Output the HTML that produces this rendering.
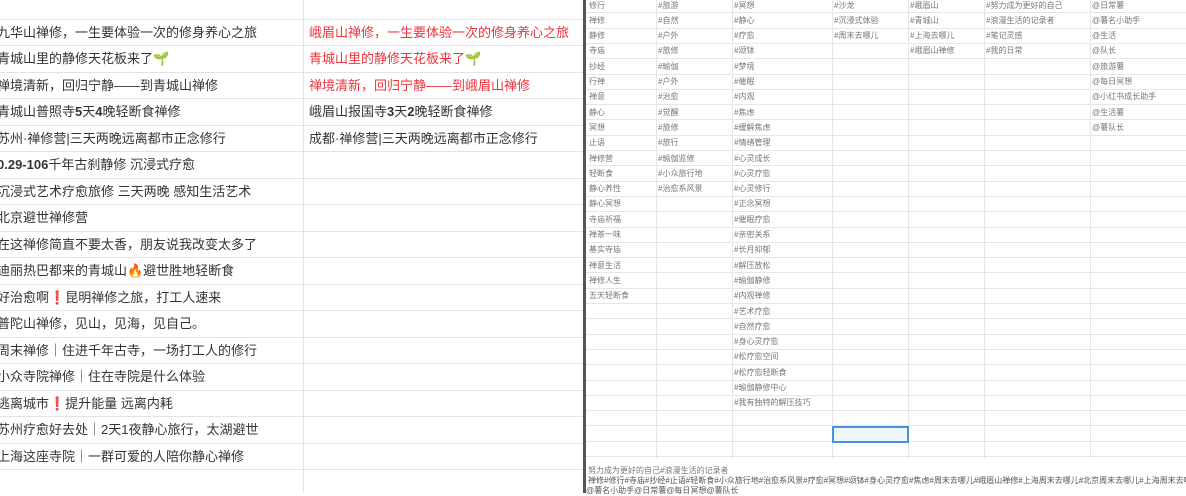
<!DOCTYPE html>
<html><head><meta charset="utf-8"><style>
*{margin:0;padding:0;box-sizing:border-box}
body{width:1186px;height:493px;overflow:hidden;background:#fff;position:relative;font-family:"Liberation Sans","Noto Sans CJK SC",sans-serif}
.l{position:absolute;left:0;width:583px;height:26.5px;border-bottom:1px solid #e3e3e3;font-size:13px;color:#333;line-height:26px;white-space:nowrap;overflow:hidden}
.l span{position:absolute}
.a{left:-3px}.b{left:309px}
.red{color:#f0323c}
.vl{position:absolute;top:0;width:1px;background:#e3e3e3}
.div{position:absolute;left:583px;top:0;width:3px;height:493px;background:#555}
.r{position:absolute;font-size:8px;color:#777;white-space:nowrap;line-height:10px}
.rl{position:absolute;left:586px;width:600px;height:1px;background:#e6e6e6}
.rv{position:absolute;top:0;height:459px;width:1px;background:#e6e6e6}
</style></head><body>
<div class="vl" style="left:303px;height:493px"></div>
<div class="l" style="top:-7px"></div>
<div class="l" style="top:19.5px"><span class="a">九华山禅修，一生要体验一次的修身养心之旅</span><span class="b red">峨眉山禅修，一生要体验一次的修身养心之旅</span></div>
<div class="l" style="top:46px"><span class="a">青城山里的静修天花板来了🌱</span><span class="b red">青城山里的静修天花板来了🌱</span></div>
<div class="l" style="top:72.5px"><span class="a">禅境清新，回归宁静——到青城山禅修</span><span class="b red">禅境清新，回归宁静——到峨眉山禅修</span></div>
<div class="l" style="top:99px"><span class="a">青城山普照寺<b>5</b>天<b>4</b>晚轻断食禅修</span><span class="b">峨眉山报国寺<b>3</b>天<b>2</b>晚轻断食禅修</span></div>
<div class="l" style="top:125.5px"><span class="a">苏州·禅修营|三天两晚远离都市正念修行</span><span class="b">成都·禅修营|三天两晚远离都市正念修行</span></div>
<div class="l" style="top:152px"><span class="a"><b>0.29-106</b>千年古刹静修 沉浸式疗愈</span></div>
<div class="l" style="top:178.5px"><span class="a">沉浸式艺术疗愈旅修 三天两晚 感知生活艺术</span></div>
<div class="l" style="top:205px"><span class="a">北京避世禅修营</span></div>
<div class="l" style="top:231.5px"><span class="a">在这禅修简直不要太香，朋友说我改变太多了</span></div>
<div class="l" style="top:258px"><span class="a">迪丽热巴都来的青城山🔥避世胜地轻断食</span></div>
<div class="l" style="top:284.5px"><span class="a">好治愈啊<span style="position:static;color:#d33">❗</span>昆明禅修之旅，打工人速来</span></div>
<div class="l" style="top:311px"><span class="a">普陀山禅修，见山，见海，见自己。</span></div>
<div class="l" style="top:337.5px"><span class="a">周末禅修｜住进千年古寺，一场打工人的修行</span></div>
<div class="l" style="top:364px"><span class="a">小众寺院禅修｜住在寺院是什么体验</span></div>
<div class="l" style="top:390.5px"><span class="a">逃离城市<span style="position:static;color:#d33">❗</span>提升能量 远离内耗</span></div>
<div class="l" style="top:417px"><span class="a">苏州疗愈好去处｜2天1夜静心旅行，太湖避世</span></div>
<div class="l" style="top:443.5px"><span class="a">上海这座寺院｜一群可爱的人陪你静心禅修</span></div>
<div class="div"></div>
<div id="rs"></div>
<div style="position:absolute;left:832px;top:426px;width:77px;height:17px;border:2px solid #4a90e2;background:#eef8fb"></div>
<div class="r" style="left:588px;top:466px">努力成为更好的自己#浪漫生活的记录者</div>
<div class="r" style="left:588px;top:476px;color:#555">禅修#修行#寺庙#抄经#止语#轻断食#小众旅行地#治愈系风景#疗愈#冥想#颂钵#身心灵疗愈#焦虑#周末去哪儿#峨眉山禅修#上海周末去哪儿#北京周末去哪儿#上海周末去哪儿</div>
<div class="r" style="left:586px;top:486px;color:#555">@薯名小助手@日常薯@每日冥想@薯队长</div>
<script>
var H=15.3,T=-3;
var cols=[587,656,732,832,908,984,1090];
var data=[
["修行","禅修","静修","寺庙","抄经","行禅","禅意","静心","冥想","止语","禅修营","轻断食","静心养性","静心冥想","寺庙祈福","禅茶一味","基实寺庙","禅意生活","禅修人生","五天轻断食"],
["#旅游","#自然","#户外","#旅修","#瑜伽","#户外","#治愈","#觉醒","#旅修","#旅行","#瑜伽监修","#小众旅行地","#治愈系风景"],
["#冥想","#静心","#疗愈","#颂钵","#梦境","#催眠","#内观","#焦虑","#缓解焦虑","#情绪管理","#心灵成长","#心灵疗愈","#心灵修行","#正念冥想","#催眠疗愈","#亲密关系","#长月抑郁","#解压放松","#瑜伽静修","#内观禅修","#艺术疗愈","#自然疗愈","#身心灵疗愈","#松疗愈空间","#松疗愈轻断食","#瑜伽静修中心","#我有独特的解压技巧"],
["#沙龙","#沉浸式体验","#周末去哪儿"],
["#峨眉山","#青城山","#上海去哪儿","#峨眉山禅修"],
["#努力成为更好的自己","#浪漫生活的记录者","#笔记灵感","#我的日常"],
["@日常薯","@薯名小助手","@生活","@队长","@旅游薯","@每日冥想","@小红书成长助手","@生活薯","@薯队长"]];
var h="";
for(var i=1;i<=30;i++){h+='<div class="rl" style="top:'+(T+i*H).toFixed(1)+'px"></div>';}
for(var c=1;c<cols.length;c++){h+='<div class="rv" style="left:'+cols[c]+'px"></div>';}
for(var c=0;c<data.length;c++){for(var r=0;r<data[c].length;r++){h+='<div class="r" style="left:'+(cols[c]+2)+'px;top:'+(T+r*H+3.5).toFixed(1)+'px">'+data[c][r]+'</div>';}}
document.getElementById("rs").innerHTML=h;
</script>
</body></html>
